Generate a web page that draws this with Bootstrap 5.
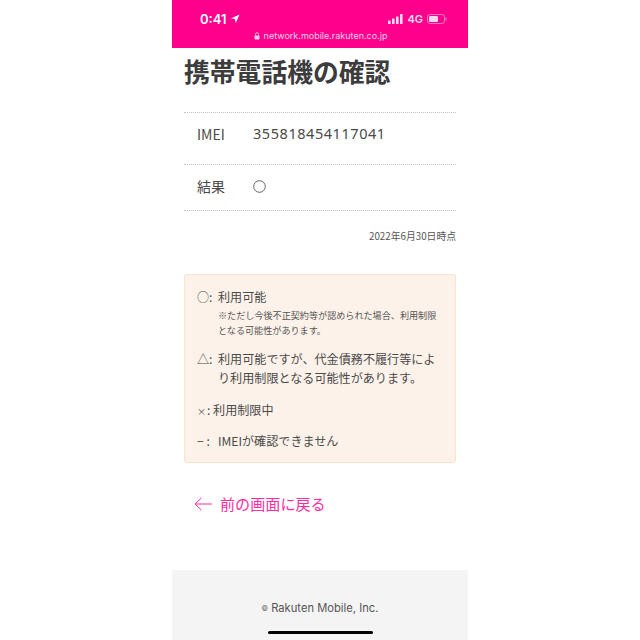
<!DOCTYPE html>
<html lang="ja">
<head>
    <meta charset="UTF-8">
    <meta name="viewport" content="width=device-width, initial-scale=1.0">
    <title>携帯電話機の確認</title>
    <link href="https://cdn.jsdelivr.net/npm/bootstrap@5.3.0/dist/css/bootstrap.min.css" rel="stylesheet">
    <style>
        html, body { height: 640px; overflow: hidden; }
        body {
            background: #fff;
            color: #4a4a4a;
            font-family: "Noto Sans CJK JP", sans-serif;
        }
        .phone { width: 296px; height: 640px; margin: 0 auto; position: relative; overflow: hidden; }
        .top-bar { background: #ff008c; height: 48px; color: #fff; padding: 0 21px 0 28px; }
        .status-row { height: 31px; padding-top: 7px; }
        .clock { font-family: Inter, sans-serif; font-size: 13px; font-weight: 600; line-height: 24px; }
        .net { font-size: 11px; font-family: Inter, sans-serif; font-weight: 600; line-height: 24px; opacity: .85; }
        .url-row { font-family: Inter, sans-serif; font-size: 9px; line-height: 12px; color: #ffd0e8; margin-top: -1px; margin-right: 6px; }
        .page-title { font-size: 25.8px; font-weight: 700; color: #3c3c3c; margin: 0; padding: 5px 0 0 12px; line-height: 36px; height: 64px; }
        .info-list { margin: 0 12px; border-top: 1px dotted #c4c4c4; }
        .info-row { border-bottom: 1px dotted #c4c4c4; padding-left: 13px; font-size: 14px; }
        .info-row.r1 { height: 52px; padding-bottom: 9px; }
        .info-row.r2 { height: 46px; padding-bottom: 2px; }
        .info-key { width: 56px; }
        .info-val { font-family: "Noto Sans", sans-serif; font-size: 14.5px; letter-spacing: .55px; }
        .as-of { font-size: 9.8px; color: #555; text-align: right; margin: 19px 12px 0 0; line-height: 13px; height: 44px; }
        .legend-box {
            margin: 0 12px; height: 189px; background: #fdf2e9; border: 1px solid #fbe3cf; border-radius: 3px;
            padding: 12px 12px 0 12px; font-size: 12.1px;
        }
        .legend-mark { flex: none; width: 21px; line-height: 19px; white-space: nowrap; }
        .legend-main { line-height: 19px; }
        .legend-note { font-size: 9.1px; line-height: 15px; margin-top: 1.5px; color: #555; }
        .legend-b { margin-top: 11px; }
        .legend-c { margin-top: 13px; }
        .legend-d { margin-top: 10px; }
        .x-mark { font-size: 9px; margin-right: 1px; }
        .back-link { color: #ff2da0; text-decoration: none; font-size: 15.1px; padding: 30px 0 0 22px; height: 107px; line-height: 21px; gap: 8px; }
        .foot { background: #f4f4f4; height: 70px; text-align: center; font-family: Inter, sans-serif; font-size: 11.2px; color: #555; padding-top: 31px; line-height: 15px; }
        .foot-c { font-size: 7px; vertical-align: 1px; }
        .home-bar { position: absolute; left: 96px; bottom: 6px; width: 105px; height: 3px; background: #000; border-radius: 2px; }
    </style>
</head>
<body>
    <div class="phone">
        <div class="top-bar">
            <div class="status-row d-flex justify-content-between">
                <div class="clock d-flex align-items-center gap-1">0:41
                    <svg width="10" height="10" viewBox="0 0 10 10"><path d="M9.5.5.8 4.4l4.1.7.8 4.2z" fill="#fff"/></svg>
                </div>
                <div class="net d-flex align-items-center gap-1">
                    <svg width="15" height="10" viewBox="0 0 15 10" fill="#fff"><rect x="0" y="6.5" width="2.6" height="3.5" rx=".5"/><rect x="4" y="4.5" width="2.6" height="5.5" rx=".5"/><rect x="8" y="2.5" width="2.6" height="7.5" rx=".5"/><rect x="12" y="0" width="2.6" height="10" rx=".5"/></svg>
                    <span>4G</span>
                    <svg width="20" height="10" viewBox="0 0 20 10"><rect x=".5" y=".5" width="17" height="9" rx="2.5" fill="none" stroke="#fff" stroke-opacity=".55"/><rect x="2" y="2" width="9" height="6" rx="1.2" fill="#fff"/><rect x="18.5" y="3.5" width="1.2" height="3" rx=".5" fill="#fff" fill-opacity=".55"/></svg>
                </div>
            </div>
            <div class="url-row d-flex justify-content-center align-items-center gap-1">
                <svg width="6" height="8" viewBox="0 0 6 8"><path d="M1.5 3.5V2.2a1.5 1.5 0 0 1 3 0v1.3" fill="none" stroke="#ffd0e8" stroke-width=".8"/><rect x=".5" y="3.4" width="5" height="4.2" rx=".8" fill="#ffd0e8"/></svg>
                <span>network.mobile.rakuten.co.jp</span>
            </div>
        </div>

        <h1 class="page-title">携帯電話機の確認</h1>

        <div class="info-list">
            <div class="info-row r1 d-flex align-items-center">
                <div class="info-key">IMEI</div>
                <div class="info-val">355818454117041</div>
            </div>
            <div class="info-row r2 d-flex align-items-center">
                <div class="info-key">結果</div>
                <svg width="13" height="13" viewBox="0 0 13 13"><circle cx="6.5" cy="6.5" r="5.8" fill="none" stroke="#555" stroke-width=".9"/></svg>
            </div>
        </div>
        <p class="as-of">2022年6月30日時点</p>

        <div class="legend-box">
            <div class="d-flex">
                <div class="legend-mark">○:</div>
                <div>
                    <div class="legend-main">利用可能</div>
                    <div class="legend-note">※ただし今後不正契約等が認められた場合、利用制限となる可能性があります。</div>
                </div>
            </div>
            <div class="d-flex legend-b">
                <div class="legend-mark">△:</div>
                <div class="legend-main">利用可能ですが、代金債務不履行等により利用制限となる可能性があります。</div>
            </div>
            <div class="legend-main legend-c"><span class="x-mark">×</span>: 利用制限中</div>
            <div class="d-flex legend-d">
                <div class="legend-mark">− :</div>
                <div class="legend-main">IMEIが確認できません</div>
            </div>
        </div>

        <a class="back-link d-flex align-items-start" href="#">
            <svg width="18" height="14" viewBox="0 0 18 14" class="mt-1"><path d="M18 7H1M7.5.8 1 7l6.5 6.2" fill="none" stroke="#ff2da0"/></svg>
            <span>前の画面に戻る</span>
        </a>

        <div class="foot"><span class="foot-c">©</span> Rakuten Mobile, Inc.</div>
        <div class="home-bar"></div>
    </div>
    <script src="https://cdn.jsdelivr.net/npm/bootstrap@5.3.0/dist/js/bootstrap.bundle.min.js"></script>
</body>
</html>
